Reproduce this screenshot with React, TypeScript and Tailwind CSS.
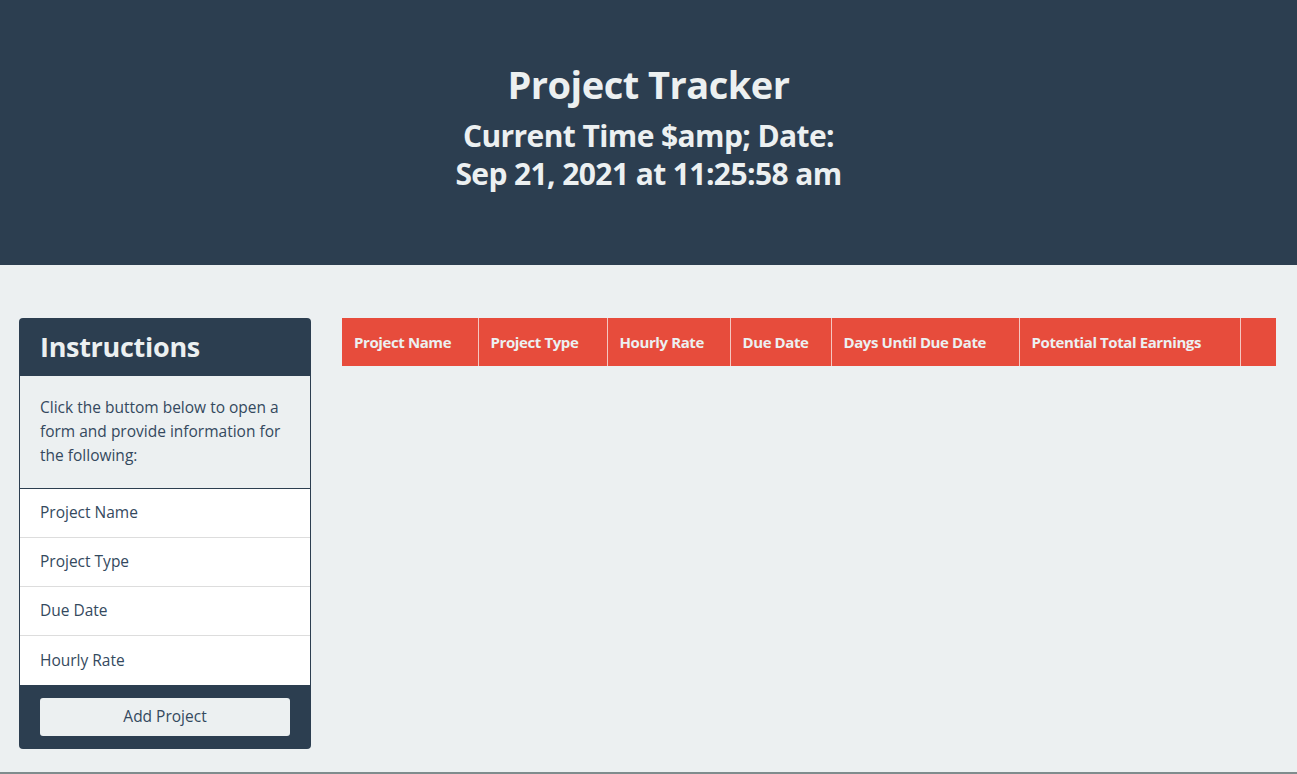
const fields = ['Project Name', 'Project Type', 'Due Date', 'Hourly Rate']

const columns = [
  { label: 'Project Name', w: 'w-[136px]' },
  { label: 'Project Type', w: 'w-[129px]' },
  { label: 'Hourly Rate', w: 'w-[123px]' },
  { label: 'Due Date', w: 'w-[101px]' },
  { label: 'Days Until Due Date', w: 'w-[188px]' },
  { label: 'Potential Total Earnings', w: 'w-[221px]' },
  { label: '', w: '' },
]

export default function App() {
  return (
    <div className="min-h-[774px] bg-[#ecf0f1] border-b-2 border-[#7f8c8d] font-['Open_Sans',sans-serif] text-[#2c3e50]">
      {/* Header */}
      <header className="h-[265px] bg-[#2c3e50] flex flex-col items-center pt-[58px] text-[#ecf0f1]">
        <h1 className="text-[38px] font-bold leading-[52px] tracking-[-0.5px]">Project Tracker</h1>
        <h2 className="text-[30px] font-bold leading-[38px] mt-[7px] tracking-[-0.6px] text-center">
          Current Time $amp; Date:
          <br />
          Sep 21, 2021 at 11:25:58 am
        </h2>
      </header>

      <main className="flex items-start gap-[31px] pt-[53px] pl-[19px] pr-[21px]">
        {/* Instructions card */}
        <aside className="w-[292px] shrink-0 rounded-[4px] overflow-hidden bg-[#2c3e50]">
          <div className="h-[58px] flex items-center px-[21px]">
            <h3 className="text-[27px] font-bold text-[#ecf0f1] tracking-[-0.3px]">Instructions</h3>
          </div>
          <div className="mx-px bg-[#ecf0f1] px-[20px] pt-[19px] pb-[21px] text-[15.5px] leading-[24px] text-[#34495e]">
            Click the buttom below to open a form and provide information for the following:
          </div>
          <ul className="mx-px mt-px bg-white">
            {fields.map((f, i) => (
              <li
                key={f}
                className={`h-[49px] flex items-center px-[20px] text-[15.5px] text-[#34495e] ${i < fields.length - 1 ? 'border-b border-[#dddddd]' : ''}`}
              >
                {f}
              </li>
            ))}
          </ul>
          <div className="h-[64px] flex items-center px-[21px]">
            <button className="w-[250px] h-[38px] rounded-[3px] bg-[#ecf0f1] text-[15.5px] text-[#34495e]">
              Add Project
            </button>
          </div>
        </aside>

        {/* Table */}
        <table className="flex-1 border-collapse">
          <thead>
            <tr className="h-[48px] bg-[#e74c3c]">
              {columns.map((c, i) => (
                <th
                  key={i}
                  className={`${c.w} text-left px-[12px] text-[15px] font-bold text-[#ecf0f1] tracking-[-0.4px] whitespace-nowrap ${i < columns.length - 1 ? 'border-r border-[#f5c6c0]' : ''}`}
                >
                  {c.label}
                </th>
              ))}
            </tr>
          </thead>
        </table>
      </main>
    </div>
  )
}
